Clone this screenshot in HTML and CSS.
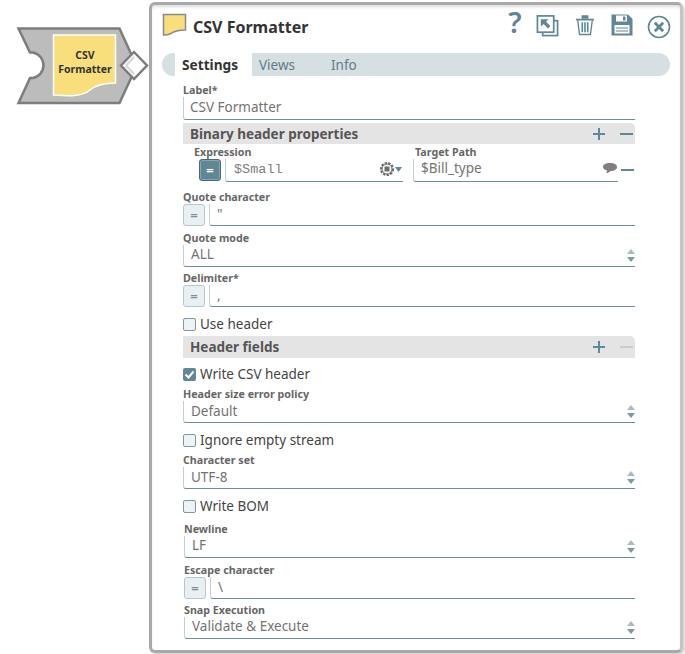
FILE: index.html
```html
<!DOCTYPE html>
<html lang="en">
<head>
<meta charset="utf-8">
<title>CSV Formatter</title>
<link rel="stylesheet" href="styles.css">
</head>
<body>
<div class="canvas">
  <div class="node">
    <svg class="node-shape" width="140" height="90" viewBox="15 26 140 90">
      <path d="M18.500 28.500 H119.500 L132 56 L122 66 L132 76 L119.500 103 H18.500 L30 78 H33 A13 13 0 0 0 33 52.500 H30 Z" fill="#bcbcbc" stroke="#7d7d7d" stroke-width="2.500" stroke-linejoin="miter"/>
      <path d="M53.500 35 H115.500 V83 C104 83 96 85 90 90 C82 97 68 96 53.500 95 Z" fill="#f8df7c" stroke="#fff" stroke-width="1.500"/>
      <path d="M134 52 L147 65.500 L134 79 L121 65.500 Z" fill="#fff" stroke="#7d7d7d" stroke-width="2.500"/>
      <path d="M126 65.500 L134 57" fill="none" stroke="#d8d8d8" stroke-width="2.500"/>
      <path d="M126 65.500 L134 74" fill="none" stroke="#d8d8d8" stroke-width="2.500"/>
    </svg>
    <div class="node-label">CSV<br>Formatter</div>
  </div>

  <section class="panel">
    <header class="titlebar">
      <svg class="title-icon" width="25" height="24" viewBox="0 0 25 24"><path d="M1.500 1.500 H23.500 V17 C17 17 12 18 8 21 C6 22 3 22 1.500 22 Z" fill="#f8df7c" stroke="#8a8a8a" stroke-width="1.500"/></svg>
      <h1 class="title">CSV Formatter</h1>
      <div class="tools">
        <span class="help">?</span>
        <svg class="tool-expand" width="23" height="23" viewBox="0 0 24 24" fill="none" stroke="#5f8797" stroke-width="1.800"><rect x="7" y="7" width="15.500" height="15.500" fill="#fff"/><rect x="1.500" y="2" width="17" height="17" fill="#fff"/><path d="M5 5.500 H13 L10.500 8 L15 12.500 L12.500 15 L8 10.500 L5 13 Z" fill="#5f8797" stroke="none"/></svg>
        <svg class="tool-trash" width="20" height="22" viewBox="0 0 22 24" fill="none" stroke="#5f8797" stroke-width="1.500"><path d="M1 6 H21" stroke-width="2"/><path d="M8 5 V2 H14 V5" fill="#5f8797"/><path d="M3 7 L5 22.500 H17 L19 7"/><path d="M8 9 V20 M11 9 V20 M14 9 V20" stroke-width="1.800"/></svg>
        <svg class="tool-save" width="22" height="22" viewBox="0 0 22 22"><path d="M0.500 0.500 H17 L21.500 5 V21.500 H0.500 Z" fill="#5f8797"/><rect x="5" y="1.500" width="11" height="6" fill="#fff"/><rect x="12" y="2.500" width="2.500" height="4" fill="#5f8797"/><rect x="3.500" y="11" width="15" height="8.500" fill="#fff"/><path d="M5 14 H17 M5 17 H17" stroke="#5f8797" stroke-width="1.200"/></svg>
        <svg class="tool-close" width="24" height="24" viewBox="0 0 24 24" fill="none" stroke="#5f8797"><circle cx="12" cy="12" r="10.500" stroke-width="1.600"/><path d="M7.800 7.800 L16.200 16.200 M16.200 7.800 L7.800 16.200" stroke-width="2.800"/></svg>
      </div>
    </header>

    <nav class="tabs">
      <span class="tab active">Settings</span>
      <span class="tab tab-views">Views</span>
      <span class="tab tab-info">Info</span>
    </nav>

    <form class="form">
      <div class="label l-label">Label*</div>
      <div class="input">CSV Formatter</div>

      <div class="section s-binary"><span>Binary header properties</span><i class="plus"></i><i class="minus"></i></div>
      <div class="mapping">
        <div class="map-col map-expr">
          <div class="label">Expression</div>
          <div class="map-row">
            <span class="eq eq-on">=</span>
            <div class="input mono-input"><span class="mono">$Small</span>
              <svg class="gear" width="24" height="18" viewBox="0 0 24 18"><circle cx="8" cy="9" r="6" fill="none" stroke="#6e6e6e" stroke-width="2.200" stroke-dasharray="2.400 1.200"/><circle cx="8" cy="9" r="5" fill="none" stroke="#6e6e6e" stroke-width="1"/><rect x="5.500" y="6.500" width="5" height="5" fill="#6e6e6e"/><path d="M16 7 H23 L19.500 12 Z" fill="#5f8797"/></svg>
            </div>
          </div>
        </div>
        <div class="map-col map-target">
          <div class="label">Target Path</div>
          <div class="map-row">
            <div class="input target-input">$Bill_type
              <svg class="bubble" width="14" height="12" viewBox="0 0 14 12"><path d="M7 1 C11 1 14 2.500 14 5 C14 7.500 11 9 7.500 9 C6 10.500 5 11 3 11 C4 10 4.200 9.300 4 8.500 C2 8 0 7 0 5 C0 2.500 3 1 7 1 Z" fill="#808080"/></svg>
            </div>
            <i class="minus row-minus"></i>
          </div>
        </div>
      </div>

      <div class="label l-quote">Quote character</div>
      <div class="eq-field"><span class="eq">=</span><div class="input">"</div></div>

      <div class="label l-mode">Quote mode</div>
      <div class="input select up">ALL<b class="spin"></b></div>

      <div class="label l-delim">Delimiter*</div>
      <div class="eq-field"><span class="eq">=</span><div class="input">,</div></div>

      <label class="check c-use"><span class="box"></span>Use header</label>

      <div class="section s-fields"><span>Header fields</span><i class="plus"></i><i class="minus off"></i></div>

      <label class="check c-write"><span class="box on"><svg width="13" height="13" viewBox="0 0 13 13"><path d="M2.500 6.500 L5.500 9.500 L10.500 3.500" fill="none" stroke="#fff" stroke-width="2"/></svg></span>Write CSV header</label>

      <div class="label l-size">Header size error policy</div>
      <div class="input select">Default<b class="spin"></b></div>

      <label class="check c-ignore"><span class="box"></span>Ignore empty stream</label>

      <div class="label l-charset">Character set</div>
      <div class="input select">UTF-8<b class="spin"></b></div>

      <label class="check c-bom"><span class="box"></span>Write BOM</label>

      <div class="label l-newline shift">Newline</div>
      <div class="input select up shift">LF<b class="spin"></b></div>

      <div class="label l-escape shift">Escape character</div>
      <div class="eq-field shift"><span class="eq">=</span><div class="input">\</div></div>

      <div class="label l-exec shift">Snap Execution</div>
      <div class="input select up shift">Validate &amp; Execute<b class="spin"></b></div>
    </form>
  </section>
</div>
</body>
</html>
```

FILE: styles.css
```css
* { box-sizing: border-box; }
html, body { margin: 0; padding: 0; background: #fff; }
body { width: 685px; height: 654px; overflow: hidden; font-family: "Noto Sans", "Open Sans", sans-serif; color: #555; }
.canvas { position: relative; width: 685px; height: 654px; display: flex; align-items: flex-start; padding: 2px 0 0 149px; }

.node { position: absolute; left: 15px; top: 26px; width: 140px; height: 90px; }
.node-shape { display: block; }
.node-label { position: absolute; left: 39px; top: 23px; width: 62px; font-size: 10.500px; line-height: 13.500px; font-weight: 700; text-align: center; color: #333; }

.panel { width: 534px; height: 651px; background: #fff; border: 3px solid #a9a9a9; border-radius: 6px; border-right-color: #c4c4c4; box-shadow: inset 0 3px 3px -1px #ddd, 2px 2px 3px rgba(0,0,0,.18); padding: 0 10px 0 10px; overflow: hidden; }

.titlebar { display: flex; align-items: center; height: 42px; padding: 2px 0 0 0; }
.title-icon { margin-top: -4px; flex: none; }
.title { margin: 0 0 0 6px; font-size: 16px; font-weight: 700; color: #333; line-height: 24px; }
.tools { margin-left: auto; display: flex; align-items: flex-start; margin-top: -1px; margin-right: -1px; }
.help { font-size: 29px; font-weight: 600; line-height: 24px; color: #5f8797; height: 24px; width: 16px; text-align: center; margin-top: -4px; }
.tool-expand { margin-left: 13px; }
.tool-trash { margin-left: 16px; }
.tool-save { margin-left: 16px; }
.tool-close { margin-left: 14px; margin-top: 1px; }

.tabs { display: flex; align-items: center; height: 23px; width: 508px; margin-top: 6px; background: #d6dfe2; border-radius: 12px; font-size: 13.500px; color: #5f7d89; }
.tab { display: block; line-height: 24px; }
.active { background: #fff; color: #333; font-weight: 700; font-size: 13.700px; height: 23px; width: 77px; margin-left: 13px; padding-left: 7px; }
.tab-views { margin-left: 7px; }
.tab-info { margin-left: 36px; }

.form { margin-left: 21px; width: 452px; }
.label { font-size: 10.700px; line-height: 14px; height: 14px; font-weight: 700; color: #666; }
.input { position: relative; height: 23px; border-left: 1px solid #c2d0d5; border-bottom: 1px solid #6a8d9a; border-bottom-left-radius: 3px; font-size: 13.500px; line-height: 20px; color: #737373; padding-left: 6px; }
.input.up { line-height: 18px; }
.input.select { height: 22px; padding-left: 7px; }
.select .spin { position: absolute; right: 0; top: 4px; width: 8px; height: 13px; }
.spin::before, .spin::after { content: ""; position: absolute; left: 0; border-left: 4px solid transparent; border-right: 4px solid transparent; }
.spin::before { top: 0; border-bottom: 5px solid #a9bcc4; }
.spin::after { bottom: 0; border-top: 5px solid #7b9aa6; }

.l-label { margin-top: 7px; }
.section { display: flex; align-items: center; height: 21px; background: #e4e4e4; border-radius: 0 5px 0 0; padding-left: 7px; font-size: 13.500px; font-weight: 700; color: #555; }
.section span { flex: 1; }
.s-binary { margin-top: 3px; }
.s-fields { margin-top: 2px; height: 22px; }
.plus, .minus { display: block; position: relative; flex: none; width: 12px; height: 12px; }
.plus { margin-right: 15px; }
.minus { margin-right: 2px; width: 13px; }
.plus::before, .minus::before { content: ""; position: absolute; left: 0; top: 5px; width: 100%; height: 2px; background: #5f8797; }
.plus::after { content: ""; position: absolute; left: 5px; top: 0; width: 2px; height: 12px; background: #5f8797; }
.minus.off::before { background: #c3cfd4; }

.mapping { display: flex; margin-top: 1px; }
.map-col { display: flex; flex-direction: column; }
.map-expr { width: 220px; padding-left: 11px; }
.map-target { margin-left: 10px; }
.map-target .label { padding-left: 2px; }
.map-row { display: flex; align-items: flex-start; }
.map-expr .eq { margin-left: 5px; }
.mono-input { flex: 1; margin-left: 4px; padding-left: 8px; line-height: 18px; }
.mono { font-family: "Liberation Mono", "DejaVu Sans Mono", monospace; font-size: 13.500px; color: #808080; }
.gear { position: absolute; right: 0; top: 1px; }
.target-input { width: 205px; line-height: 19px; padding-left: 7px; }
.bubble { position: absolute; right: 1px; top: 3px; }
.row-minus { margin: 5px 0 0 3px; }
.eq { flex: none; display: block; width: 22px; height: 22px; border: 1px solid #b6c6cc; border-radius: 3px; background: #e9f0f3; color: #7f8f96; font-size: 13px; line-height: 20px; text-align: center; font-weight: 700; }
.eq-on { background: #5f8797; border-color: #46697a; color: #fff; box-shadow: inset 0 0 0 1px #8aa6b2; }

.eq-field { display: flex; align-items: flex-start; }
.eq-field .input { flex: 1; margin-left: 4px; padding-left: 7px; height: 22px; }
.l-quote { margin-top: 8px; }
.l-mode { margin-top: 5px; }
.l-delim { margin-top: 4px; }
.shift { margin-left: 1px; }

.check { display: flex; align-items: center; height: 20px; font-size: 13.500px; color: #444; }
.box { flex: none; display: flex; width: 13px; height: 13px; margin-right: 4px; border: 1px solid #7f98a2; border-radius: 2px; background: #eef3f5; }
.box.on { background: #5f8797; border: 0; }
.c-use { margin-top: 7px; }
.c-write { margin-top: 6px; }
.l-size { margin-top: 3px; }
.c-ignore { margin-top: 7px; }
.l-charset { margin-top: 3px; }
.c-bom { margin-top: 7px; }
.l-newline { margin-top: 6px; }
.l-escape { margin-top: 5px; }
.l-exec { margin-top: 4px; }
```
